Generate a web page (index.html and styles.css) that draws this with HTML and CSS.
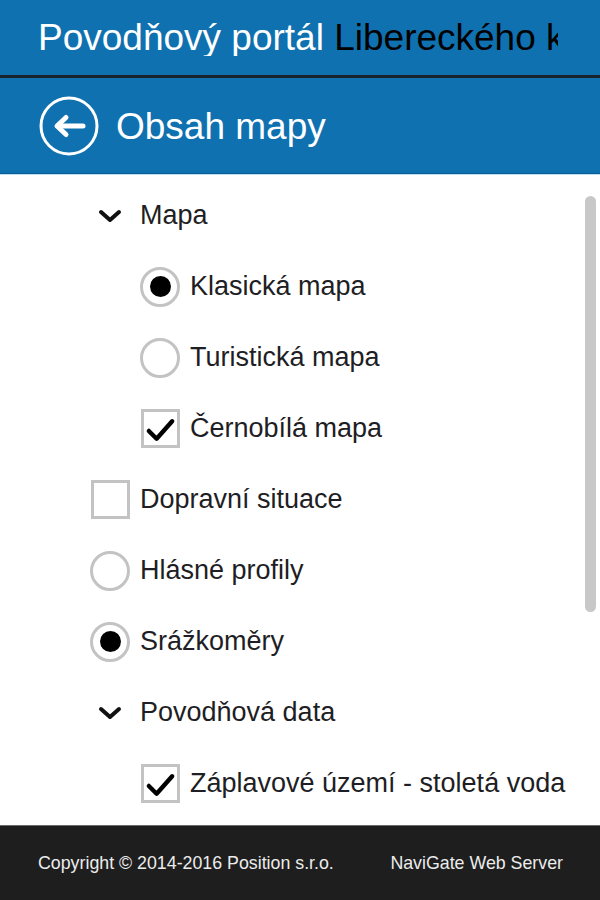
FILE: index.html
```html
<!DOCTYPE html>
<html lang="cs">
<head>
<meta charset="utf-8">
<title>Obsah mapy</title>
<link rel="stylesheet" href="styles.css">
</head>
<body>
<div class="app">
  <header class="topbar">
    <div class="brand"><span class="brand-light">Povodňový portál</span> <span class="brand-dark">Libereckého kraje</span></div>
  </header>
  <div class="titlebar">
    <svg class="back" width="60" height="60" viewBox="0 0 60 60" aria-hidden="true">
      <circle cx="30" cy="30" r="28" fill="none" stroke="#fff" stroke-width="3"/>
      <path d="M44 30H19" fill="none" stroke="#fff" stroke-width="5" stroke-linecap="round"/>
      <path d="M27 21.5L18 30L27 38.5" fill="none" stroke="#fff" stroke-width="5" stroke-linecap="round" stroke-linejoin="round"/>
    </svg>
    <h1 class="title">Obsah mapy</h1>
  </div>
  <main class="content">
    <ul class="layers">
      <li class="row lvl0">
        <span class="slot"><svg width="24" height="14" viewBox="0 0 24 14"><path d="M3 3L12 11L21 3" fill="none" stroke="#111" stroke-width="4" stroke-linecap="round" stroke-linejoin="round"/></svg></span>
        <span class="label">Mapa</span>
      </li>
      <li class="row lvl1">
        <span class="slot"><span class="radio on"></span></span>
        <span class="label">Klasická mapa</span>
      </li>
      <li class="row lvl1">
        <span class="slot"><span class="radio"></span></span>
        <span class="label">Turistická mapa</span>
      </li>
      <li class="row lvl1">
        <span class="slot"><span class="check"><svg width="34" height="34" viewBox="0 0 34 34"><path d="M5 19L13 27L29 9" fill="none" stroke="#000" stroke-width="4.5" stroke-linecap="round" stroke-linejoin="round"/></svg></span></span>
        <span class="label">Černobílá mapa</span>
      </li>
      <li class="row lvl0">
        <span class="slot"><span class="check"></span></span>
        <span class="label">Dopravní situace</span>
      </li>
      <li class="row lvl0">
        <span class="slot"><span class="radio"></span></span>
        <span class="label">Hlásné profily</span>
      </li>
      <li class="row lvl0">
        <span class="slot"><span class="radio on"></span></span>
        <span class="label">Srážkoměry</span>
      </li>
      <li class="row lvl0">
        <span class="slot"><svg width="24" height="14" viewBox="0 0 24 14"><path d="M3 3L12 11L21 3" fill="none" stroke="#111" stroke-width="4" stroke-linecap="round" stroke-linejoin="round"/></svg></span>
        <span class="label">Povodňová data</span>
      </li>
      <li class="row lvl1">
        <span class="slot"><span class="check"><svg width="34" height="34" viewBox="0 0 34 34"><path d="M5 19L13 27L29 9" fill="none" stroke="#000" stroke-width="4.5" stroke-linecap="round" stroke-linejoin="round"/></svg></span></span>
        <span class="label">Záplavové území - stoletá voda</span>
      </li>
      <li class="row lvl1">
        <span class="slot"><span class="check"></span></span>
        <span class="label">Záplavové území - aktivní zóna</span>
      </li>
    </ul>
    <div class="scrollbar"></div>
  </main>
  <footer class="footer">
    <span class="copy">Copyright © 2014-2016 Position s.r.o.</span>
    <span class="server">NaviGate Web Server</span>
  </footer>
</div>
</body>
</html>
```

FILE: styles.css
```css
* { box-sizing: border-box; }
html, body { margin: 0; padding: 0; }
body {
  width: 600px;
  height: 900px;
  overflow: hidden;
  font-family: "Liberation Sans", Arial, sans-serif;
  background: #fff;
}
.app {
  display: flex;
  flex-direction: column;
  height: 900px;
}
.topbar {
  height: 78px;
  flex: none;
  background: #0f71b0;
  border-bottom: 3px solid #17242d;
  padding: 0 38px;
  display: flex;
  align-items: center;
}
.brand {
  font-size: 37px;
  line-height: 37px;
  white-space: nowrap;
  overflow: hidden;
  width: 520px;
}
.brand-light { color: #fff; }
.brand-dark { color: #000; }
.titlebar {
  height: 96px;
  flex: none;
  background: #0f71b0;
  border-bottom: 1px solid #0a5e94;
  box-shadow: 0 1px 0 #bfe0f3;
  display: flex;
  align-items: center;
  padding-left: 39px;
  gap: 17px;
}
.back { display: block; flex: none; }
.title {
  margin: 0;
  font-weight: normal;
  font-size: 37px;
  line-height: 37px;
  color: #fff;
  padding-top: 2px;
}
.content {
  flex: 1;
  position: relative;
  overflow: hidden;
  padding-top: 6px;
}
.layers {
  list-style: none;
  margin: 0;
  padding: 0;
}
.row {
  display: flex;
  align-items: center;
  height: 71px;
  gap: 10px;
}
.lvl0 { padding-left: 90px; }
.lvl1 { padding-left: 140px; }
.slot {
  width: 40px;
  height: 40px;
  flex: none;
  display: flex;
  align-items: center;
  justify-content: center;
}
.slot svg { display: block; }
.label {
  font-size: 27px;
  color: #1e1e24;
  white-space: nowrap;
}
.radio {
  width: 40px;
  height: 40px;
  border-radius: 50%;
  border: 3px solid #c3c3c3;
  display: flex;
  align-items: center;
  justify-content: center;
}
.radio.on::after {
  content: "";
  width: 21px;
  height: 21px;
  border-radius: 50%;
  background: #000;
}
.check {
  width: 39px;
  height: 39px;
  border: 3px solid #c3c3c3;
  display: flex;
  align-items: center;
  justify-content: center;
}
.scrollbar {
  position: absolute;
  right: 4px;
  top: 22px;
  width: 11px;
  height: 416px;
  border-radius: 6px;
  background: #c8c8c8;
}
.footer {
  height: 75px;
  flex: none;
  background: #1e1e1e;
  border-top: 1px solid #6a6a6a;
  display: flex;
  align-items: center;
  padding: 0 37px 0 38px;
  color: #ececec;
  font-size: 17.8px;
}
.copy { flex: none; }
.server { flex: none; margin-left: auto; }
```
